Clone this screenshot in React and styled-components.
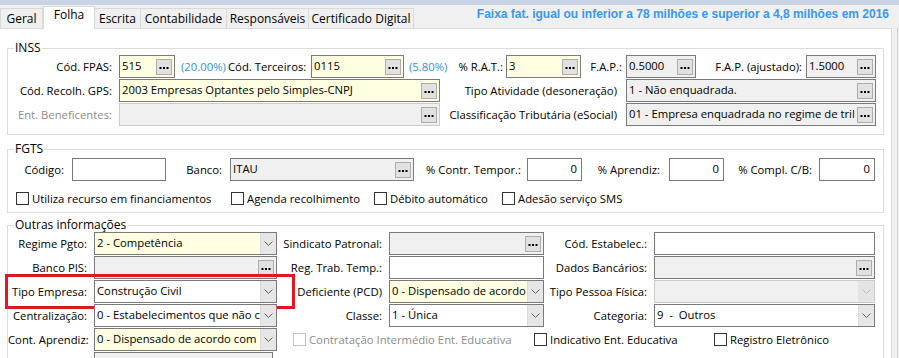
import React from "react"
import styled, { createGlobalStyle } from "styled-components"

const GlobalStyle = createGlobalStyle`
  html, body { margin: 0; padding: 0; background: #f0f0f0; }
  body {
    font-family: "Open Sans", "Noto Sans", sans-serif;
    font-size: 11.3px;
    color: #000;
  }
  #root { width: 899px; height: 358px; overflow: hidden; }
  * { box-sizing: border-box; }
`

const Window = styled.div`
  width: 899px;
  height: 358px;
  display: flex;
  flex-direction: column;
  background: #f0f0f0;
  overflow: hidden;
`
const TopStrip = styled.div`
  height: 5px;
  flex: none;
  background: #cad4e4;
`
const Body = styled.div`
  flex: 1;
  display: flex;
  min-height: 0;
`
const Main = styled.div`
  width: 892px;
  flex: none;
  display: flex;
  flex-direction: column;
`
const SideStrip = styled.div`
  flex: 1;
  margin-top: 23px;
  border-right: 1px solid #c6d2e4;
  margin-right: 1px;
`
const TabRow = styled.div`
  height: 23px;
  flex: none;
  display: flex;
  align-items: flex-end;
`
const Tab = styled.div`
  width: ${p => p.$w}px;
  height: ${p => (p.$active ? 23 : 20)}px;
  margin-bottom: ${p => (p.$active ? -1 : 0)}px;
  position: relative;
  z-index: ${p => (p.$active ? 2 : 0)};
  background: ${p => (p.$active ? "#fff" : "#f0f0f0")};
  border: 1px solid #d9d9d9;
  border-bottom: none;
  border-left: ${p => (p.$first || p.$active ? "1px solid #d9d9d9" : "none")};
  text-align: center;
  font-size: 12px;
  line-height: ${p => (p.$active ? 16 : 19)}px;
  white-space: nowrap;
`
const HeaderNote = styled.div`
  margin-left: auto;
  align-self: flex-start;
  padding: 2px 3px 0 0;
  color: #3a97ee;
  font-family: "Liberation Sans", Arial, sans-serif;
  font-weight: bold;
  font-size: 12px;
  white-space: nowrap;
`
const Panel = styled.div`
  flex: 1;
  background: #fff;
  border-top: 1px solid #d9d9d9;
  border-right: 1px solid #d9d9d9;
  padding: 12px 7px 0 7px;
`
const Group = styled.fieldset`
  margin: ${p => p.$mt || 0}px 0 0 0;
  padding: ${p => p.$pt || 0}px 0 ${p => p.$pb || 0}px 0;
  border: 1px solid #dcdcdc;
  min-width: 0;
`
const Legend = styled.legend`
  margin-left: 6px;
  padding: 0 1px;
  line-height: 14px;
  font-size: 12px;
`
const Row = styled.div`
  display: flex;
  align-items: center;
  height: ${p => p.$h || 23}px;
  margin-top: ${p => p.$mt ?? 1}px;
  position: relative;
  &:first-of-type { margin-top: 0; }
`
const Label = styled.div`
  width: ${p => p.$w}px;
  flex: none;
  text-align: right;
  padding-right: ${p => p.$pr ?? 7}px;
  white-space: nowrap;
  color: ${p => (p.$disabled ? "#8c8c8c" : "#000")};
`
const Percent = styled.div`
  width: ${p => p.$w}px;
  flex: none;
  padding-left: ${p => p.$pl}px;
  color: #3a8ede;
  white-space: nowrap;
`
const fills = {
  yellow: "#ffffe1",
  white: "#ffffff",
  gray: "#f0f0f0",
  disabled: "#f0f0f0",
}
const Field = styled.div`
  width: ${p => p.$w}px;
  height: 23px;
  flex: none;
  display: flex;
  align-items: center;
  border: 1px solid ${p => (p.$kind === "disabled" ? "#cccccc" : "#7a7a7a")};
  background: ${p => fills[p.$kind] || "#fff"};
  overflow: hidden;
`
const FieldText = styled.div`
  flex: 1;
  min-width: 0;
  padding: 0 ${p => (p.$right ? 4 : 2)}px 0 2px;
  text-align: ${p => (p.$right ? "right" : "left")};
  white-space: pre;
  overflow: hidden;
  align-self: stretch;
  line-height: 20px;
`
const DotsButton = styled.div`
  width: 16px;
  height: 16px;
  flex: none;
  margin-right: 2px;
  background: #e1e1e1;
  border: 1px solid #adadad;
  display: flex;
  align-items: center;
  justify-content: center;
  padding-top: 2px;
`
const ArrowBox = styled.div`
  width: 16px;
  flex: none;
  align-self: stretch;
  background: ${p => (p.$disabled ? "#e4e4e4" : "#e6e6e6")};
  border-left: 1px solid ${p => (p.$disabled ? "#e4e4e4" : "#dadada")};
  display: flex;
  align-items: center;
  justify-content: center;
`
const CheckRow = styled.div`
  display: flex;
  align-items: center;
`
const CheckItem = styled.label`
  width: ${p => (p.$w ? `${p.$w}px` : "auto")};
  flex: none;
  display: flex;
  align-items: center;
  padding-left: ${p => p.$pl || 0}px;
  white-space: nowrap;
  color: ${p => (p.$disabled ? "#8c8c8c" : "#000")};
`
const Box = styled.span`
  width: 13px;
  height: 13px;
  flex: none;
  margin-right: 3px;
  background: #fff;
  border: 1px solid ${p => (p.$disabled ? "#c4c4c4" : "#333")};
`
const RedMark = styled.div`
  position: absolute;
  left: -3px;
  top: -6px;
  width: 290px;
  height: 35px;
  border: 3px solid #e3171f;
  pointer-events: none;
`

const Dots = () => (
  <svg width="10" height="4" viewBox="0 0 10 4">
    <rect x="0.5" y="1" width="2" height="2" fill="#000" />
    <rect x="4" y="1" width="2" height="2" fill="#000" />
    <rect x="7.5" y="1" width="2" height="2" fill="#000" />
  </svg>
)

const Chevron = ({ disabled }) => (
  <svg width="9" height="5" viewBox="0 0 9 5">
    <polyline points="0.5,0.5 4.5,4.5 8.5,0.5" fill="none" stroke={disabled ? "#bcbcbc" : "#606060"} strokeWidth="1" />
  </svg>
)

const Input = ({ w, kind = "white", text = "", dots, combo, right }) => (
  <Field $w={w} $kind={kind}>
    <FieldText $right={right}>{text}</FieldText>
    {dots && <DotsButton><Dots /></DotsButton>}
    {combo && <ArrowBox $disabled={kind === "disabled"}><Chevron disabled={kind === "disabled"} /></ArrowBox>}
  </Field>
)

const Check = ({ w, pl, disabled, children }) => (
  <CheckItem $w={w} $pl={pl} $disabled={disabled}>
    <Box $disabled={disabled} />
    {children}
  </CheckItem>
)

const tabs = [
  { name: "Geral", w: 43 },
  { name: "Folha", w: 52, active: true },
  { name: "Escrita", w: 46 },
  { name: "Contabilidade", w: 86 },
  { name: "Responsáveis", w: 82 },
  { name: "Certificado Digital", w: 105 },
]

export default function App() {
  return (
    <>
      <GlobalStyle />
      <Window>
        <TopStrip />
        <Body>
          <Main>
            <TabRow>
              {tabs.map((t, i) => (
                <Tab key={t.name} $w={t.w} $active={t.active} $first={i === 0}>{t.name}</Tab>
              ))}
              <HeaderNote>Faixa fat. igual ou inferior a 78 milhões e superior a 4,8 milhões em 2016</HeaderNote>
            </TabRow>
            <Panel>
              <Group $pb={8}>
                <Legend>INSS</Legend>
                <Row>
                  <Label $w={111}>Cód. FPAS:</Label>
                  <Input w={56} kind="yellow" text="515" dots />
                  <Percent $w={53} $pl={6}>(20.00%)</Percent>
                  <Label $w={83} $pr={6}>Cód. Terceiros:</Label>
                  <Input w={93} kind="yellow" text="0115" dots />
                  <Percent $w={48} $pl={5}>(5.80%)</Percent>
                  <Label $w={54} $pr={3}>% R.A.T.:</Label>
                  <Input w={75} kind="yellow" text="3" dots />
                  <Label $w={45} $pr={4}>F.A.P.:</Label>
                  <Input w={70} kind="gray" text="0.5000" dots />
                  <Label $w={110} $pr={4}>F.A.P. (ajustado):</Label>
                  <Input w={70} kind="gray" text="1.5000" dots />
                </Row>
                <Row>
                  <Label $w={111}>Cód. Recolh. GPS:</Label>
                  <Input w={321} kind="yellow" text="2003 Empresas Optantes pelo Simples-CNPJ" dots />
                  <Label $w={186} $pr={9}>Tipo Atividade (desoneração)</Label>
                  <Input w={250} kind="gray" text="1 - Não enquadrada." dots />
                </Row>
                <Row>
                  <Label $w={111} $disabled>Ent. Beneficentes:</Label>
                  <Input w={321} kind="disabled" dots />
                  <Label $w={186} $pr={9}>Classificação Tributária (eSocial)</Label>
                  <Input w={250} kind="gray" text="01 - Empresa enquadrada no regime de tril" dots />
                </Row>
              </Group>

              <Group $mt={7} $pt={2} $pb={3}>
                <Legend>FGTS</Legend>
                <Row>
                  <Label $w={64} $pr={8}>Código:</Label>
                  <Input w={94} />
                  <Label $w={64} $pr={8}>Banco:</Label>
                  <Input w={184} kind="gray" text="ITAU" dots />
                  <Label $w={113} $pr={6}>% Contr. Tempor.:</Label>
                  <Input w={55} text="0" right />
                  <Label $w={87} $pr={9}>% Aprendiz:</Label>
                  <Input w={55} text="0" right />
                  <Label $w={95} $pr={7}>% Compl. C/B:</Label>
                  <Input w={56} text="0" right />
                </Row>
                <Row $h={22} $mt={6}>
                  <CheckRow>
                    <Check w={223} pl={8}>Utiliza recurso em financiamentos</Check>
                    <Check w={143}>Agenda recolhimento</Check>
                    <Check w={128}>Débito automático</Check>
                    <Check>Adesão serviço SMS</Check>
                  </CheckRow>
                </Row>
              </Group>

              <Group $mt={5}>
                <Legend>Outras informações</Legend>
                <Row>
                  <Label $w={86}>Regime Pgto:</Label>
                  <Input w={183} kind="yellow" text="2 - Competência" combo />
                  <Label $w={112}>Sindicato Patronal:</Label>
                  <Input w={155} kind="gray" dots />
                  <Label $w={110}>Cód. Estabelec.:</Label>
                  <Input w={221} />
                </Row>
                <Row>
                  <Label $w={86}>Banco PIS:</Label>
                  <Input w={183} kind="gray" dots />
                  <Label $w={112}>Reg. Trab. Temp.:</Label>
                  <Input w={155} />
                  <Label $w={110}>Dados Bancários:</Label>
                  <Input w={221} kind="gray" dots />
                </Row>
                <Row>
                  <Label $w={86}>Tipo Empresa:</Label>
                  <Input w={183} text="Construção Civil" combo />
                  <Label $w={112}>Deficiente (PCD)</Label>
                  <Input w={155} kind="yellow" text="0 - Dispensado de acordo" combo />
                  <Label $w={110}>Tipo Pessoa Física:</Label>
                  <Input w={221} kind="disabled" combo />
                  <RedMark />
                </Row>
                <Row>
                  <Label $w={86}>Centralização:</Label>
                  <Input w={183} text="0 - Estabelecimentos que não c" combo />
                  <Label $w={112}>Classe:</Label>
                  <Input w={155} text="1 - Única" combo />
                  <Label $w={110}>Categoria:</Label>
                  <Input w={221} text="9  -  Outros" combo />
                </Row>
                <Row>
                  <Label $w={86}>Cont. Aprendiz:</Label>
                  <Input w={183} kind="yellow" text="0 - Dispensado de acordo com" combo />
                  <Check w={257} pl={16} disabled>Contratação Intermédio Ent. Educativa</Check>
                  <Check w={180}>Indicativo Ent. Educativa</Check>
                  <Check>Registro Eletrônico</Check>
                </Row>
                <Row>
                  <Label $w={86}></Label>
                  <Input w={179} kind="gray" />
                </Row>
              </Group>
            </Panel>
          </Main>
          <SideStrip />
        </Body>
      </Window>
    </>
  )
}
